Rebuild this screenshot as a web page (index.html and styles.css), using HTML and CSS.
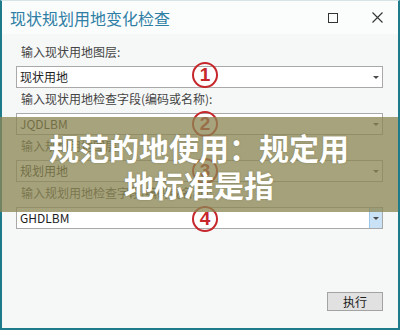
FILE: index.html
```html
<!DOCTYPE html>
<html lang="zh">
<head>
<meta charset="utf-8">
<link rel="stylesheet" href="styles.css">
</head>
<body>
<div class="window">
  <div class="titlebar">
    <span class="title">现状规划用地变化检查</span>
    <div class="controls">
      <span class="max"></span>
      <svg class="close" width="11" height="11" viewBox="0 0 11 11"><path d="M0.5 0.5 L10.5 10.5 M10.5 0.5 L0.5 10.5" stroke="#333" stroke-width="1.1" fill="none"/></svg>
    </div>
  </div>
  <div class="content">
    <div class="field">
      <div class="label">输入现状用地图层:</div>
      <div class="combo"><span class="value">现状用地</span><span class="drop"><span class="arrow"></span></span><span class="mark mark-1">1</span></div>
    </div>
    <div class="field">
      <div class="label">输入现状用地检查字段(编码或名称):</div>
      <div class="combo"><span class="value">JQDLBM</span><span class="drop"><span class="arrow"></span></span><span class="mark">2</span></div>
    </div>
    <div class="field">
      <div class="label">输入规划用地图层</div>
      <div class="combo"><span class="value">规划用地</span><span class="drop"><span class="arrow"></span></span><span class="mark">3</span></div>
    </div>
    <div class="field">
      <div class="label">输入规划用地检查字段(编码或名称):</div>
      <div class="combo"><span class="value">GHDLBM</span><span class="drop drop-active"><span class="arrow"></span></span><span class="mark mark-4">4</span></div>
    </div>
    <div class="actions"><button class="btn">执行</button></div>
  </div>
  <div class="band"><div class="band-text">规范的地使用：规定用<br>地标准是指</div></div>
</div>
</body>
</html>
```
FILE: styles.css
```css
* { box-sizing: border-box; }
html, body { margin: 0; padding: 0; }
body {
  width: 400px;
  height: 330px;
  overflow: hidden;
  font-family: "Noto Sans CJK SC", "Noto Sans", sans-serif;
  background: #f6f8f8;
}
.window {
  position: relative;
  width: 400px;
  height: 330px;
  border: 2px solid #1d7b8a;
  border-top: 1px solid #d6e4e7;
  background: #f6f8f8;
  display: flex;
  flex-direction: column;
}
.titlebar {
  height: 33px;
  flex: none;
  display: flex;
  align-items: center;
  padding-left: 8px;
  background: #fbfcfc;
}
.title {
  font-size: 16px;
  color: #2f7fa5;
  line-height: 20px;
  flex: 1;
}
.controls {
  display: flex;
  align-items: center;
  gap: 34px;
  margin-right: 15px;
}
.max {
  width: 10px;
  height: 10px;
  border: 1px solid #333;
}
.close { display: block; }
.content {
  flex: 1;
  display: flex;
  flex-direction: column;
  padding: 10px 15px 17px 14px;
}
.field {
  margin-bottom: 3px;
}
.label {
  font-size: 12px;
  line-height: 16px;
  height: 16px;
  color: #444;
  padding-left: 5px;
  margin-bottom: 6px;
}
.combo {
  position: relative;
  height: 22px;
  border: 1px solid #a9a9a9;
  background: #fff;
  display: flex;
  align-items: center;
}
.value {
  flex: 1;
  font-size: 12px;
  color: #1e1e1e;
  padding-left: 3px;
  line-height: 20px;
}
.drop {
  width: 13px;
  height: 20px;
  display: flex;
  align-items: center;
  justify-content: center;
}
.drop-active {
  background: #c9e2f6;
  border-left: 1px solid #9cc6e8;
}
.arrow {
  width: 0;
  height: 0;
  border-left: 3px solid transparent;
  border-right: 3px solid transparent;
  border-top: 3px solid #4a4a4a;
}
.mark {
  position: absolute;
  left: 175px;
  top: -3px;
  width: 26px;
  height: 26px;
  border: 2.5px solid #c6272b;
  border-radius: 50%;
  color: #c6272b;
  font-family: "Liberation Sans", Arial, sans-serif;
  font-weight: 700;
  font-size: 19px;
  line-height: 21px;
  text-align: center;
  background: transparent;
}
.mark-1 { top: -5px; }
.mark-4 { top: -2px; }
.actions {
  margin-top: auto;
  display: flex;
  justify-content: flex-end;
}
.btn {
  width: 56px;
  height: 19px;
  padding: 0;
  border: 1px solid #a3a3a3;
  background: #e1e1e1;
  font-family: "Noto Sans CJK SC", sans-serif;
  font-size: 12px;
  line-height: 17px;
  color: #222;
}
.band {
  position: absolute;
  left: -2px;
  right: 0;
  top: 116px;
  height: 95px;
  background: rgba(139, 134, 83, 0.76);
  display: flex;
  align-items: center;
  justify-content: center;
}
.band-text {
  color: #fff;
  font-weight: 700;
  font-size: 30px;
  line-height: 37px;
  text-align: center;
  padding-top: 3px;
  text-shadow: 0 0 2px rgba(60, 60, 30, 0.35);
}
```
